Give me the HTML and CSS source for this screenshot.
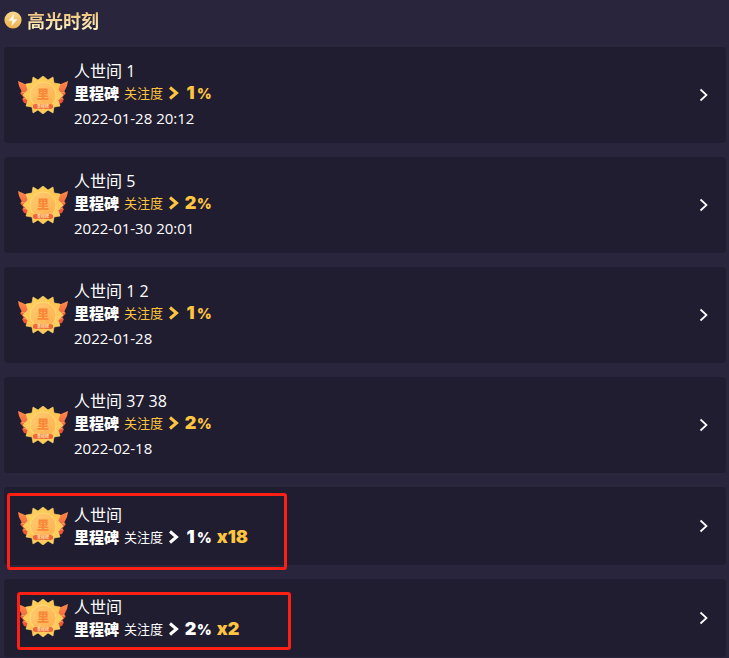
FILE: index.html
```html
<!DOCTYPE html>
<html lang="zh-CN">
<head>
<meta charset="utf-8">
<meta name="viewport" content="width=device-width, initial-scale=1">
<title>高光时刻</title>
<link rel="stylesheet" href="styles.css">
</head>
<body>
<svg class="defs" width="0" height="0" aria-hidden="true">
  <defs>
    <linearGradient id="gold" x1="0" y1="0" x2="1" y2="1">
      <stop offset="0" stop-color="#ffd45e"/><stop offset=".5" stop-color="#ffc452"/><stop offset="1" stop-color="#ffd565"/>
    </linearGradient>
    <linearGradient id="disc" x1="0" y1="0" x2="1" y2="1">
      <stop offset="0" stop-color="#ffcf73"/><stop offset="1" stop-color="#ffab4a"/>
    </linearGradient>
    <linearGradient id="wing" x1="0" y1="0" x2="0" y2="1">
      <stop offset="0" stop-color="#ff8a4a"/><stop offset="1" stop-color="#e94a35"/>
    </linearGradient>
    <linearGradient id="bolt" x1="0" y1="0" x2="0" y2="1">
      <stop offset="0" stop-color="#f8d98f"/><stop offset="1" stop-color="#eeaf4f"/>
    </linearGradient>
    <symbol id="badge" viewBox="0 0 50 38">
      <g>
        <path d="M0 5 L7 8 L14 8 L14 29 L6 27 L4 23 L6 22 L2 17 L4 16 L1 10 Z" fill="url(#wing)"/>
        <path d="M3 16 L10 18 M5 22 L11 24" stroke="#ffae65" stroke-width=".8"/>
      </g>
      <g transform="translate(50 0) scale(-1 1)">
        <path d="M0 5 L7 8 L14 8 L14 29 L6 27 L4 23 L6 22 L2 17 L4 16 L1 10 Z" fill="url(#wing)"/>
        <path d="M3 16 L10 18 M5 22 L11 24" stroke="#ffae65" stroke-width=".8"/>
      </g>
      <path d="M15 1 L20 4 L25 0 L30 4 L35 1 L36 7 L42 8 L40 14 L45 19 L40 24 L42 30 L36 31 L35 37 L30 34 L25 38 L20 34 L15 37 L14 31 L8 30 L10 24 L5 19 L10 14 L8 8 L14 7 Z" fill="url(#gold)" stroke="#ffdc6c" stroke-width=".6" stroke-linejoin="round"/>
      <circle cx="25" cy="19" r="13" fill="url(#disc)" stroke="#ffda78"/>
      <circle cx="25" cy="19" r="11" fill="none" stroke="#ffbd62" stroke-width=".6"/>
      <text x="25" y="23" class="badge-char">里</text>
      <path d="M17 28 H33 L35 29 V32 L33 33 H17 L15 32 V29 Z" fill="#f2683a"/>
      <text x="25" y="32" class="badge-ribbon">里程碑</text>
    </symbol>
    <symbol id="chevron" viewBox="0 0 10 14">
      <path d="M1 1.5 L7.5 7 L1 12.5" fill="none" stroke="currentColor" stroke-width="3"/>
    </symbol>
    <symbol id="arrow" viewBox="0 0 10 14">
      <path d="M1.5 1.5 L7.5 7 L1.5 12.5" fill="none" stroke="currentColor" stroke-width="1.7"/>
    </symbol>
  </defs>
</svg>
<main class="page">
  <header class="heading">
    <svg class="heading-icon" viewBox="0 0 18 18" aria-hidden="true">
      <circle cx="9" cy="9" r="8.6" fill="url(#bolt)"/>
      <path d="M10 3 L4.5 9.7 H8.4 L7.5 15 L13.5 8.2 H9.5 Z" fill="#fff8e6"/>
    </svg>
    <h1>高光时刻</h1>
  </header>
  <ul class="list">
    <li><a class="card" href="#">
      <svg class="badge" aria-hidden="true"><use href="#badge"/></svg>
      <span class="info">
        <span class="title">人世间 1</span>
        <span class="milestone"><b class="label">里程碑</b><span class="metric">关注度</span><svg class="chevron" aria-hidden="true"><use href="#chevron"/></svg><span class="amount"><span class="value">1</span><span class="unit">%</span></span></span>
        <time class="date">2022-01-28 20:12</time>
      </span>
      <svg class="arrow" aria-hidden="true"><use href="#arrow"/></svg>
    </a></li>
    <li><a class="card" href="#">
      <svg class="badge" aria-hidden="true"><use href="#badge"/></svg>
      <span class="info">
        <span class="title">人世间 5</span>
        <span class="milestone"><b class="label">里程碑</b><span class="metric">关注度</span><svg class="chevron" aria-hidden="true"><use href="#chevron"/></svg><span class="amount"><span class="value">2</span><span class="unit">%</span></span></span>
        <time class="date">2022-01-30 20:01</time>
      </span>
      <svg class="arrow" aria-hidden="true"><use href="#arrow"/></svg>
    </a></li>
    <li><a class="card" href="#">
      <svg class="badge" aria-hidden="true"><use href="#badge"/></svg>
      <span class="info">
        <span class="title">人世间 1 2</span>
        <span class="milestone"><b class="label">里程碑</b><span class="metric">关注度</span><svg class="chevron" aria-hidden="true"><use href="#chevron"/></svg><span class="amount"><span class="value">1</span><span class="unit">%</span></span></span>
        <time class="date">2022-01-28</time>
      </span>
      <svg class="arrow" aria-hidden="true"><use href="#arrow"/></svg>
    </a></li>
    <li><a class="card" href="#">
      <svg class="badge" aria-hidden="true"><use href="#badge"/></svg>
      <span class="info">
        <span class="title">人世间 37 38</span>
        <span class="milestone"><b class="label">里程碑</b><span class="metric">关注度</span><svg class="chevron" aria-hidden="true"><use href="#chevron"/></svg><span class="amount"><span class="value">2</span><span class="unit">%</span></span></span>
        <time class="date">2022-02-18</time>
      </span>
      <svg class="arrow" aria-hidden="true"><use href="#arrow"/></svg>
    </a></li>
    <li><a class="card card-group" href="#">
      <svg class="badge" aria-hidden="true"><use href="#badge"/></svg>
      <span class="info">
        <span class="title">人世间</span>
        <span class="milestone"><b class="label">里程碑</b><span class="metric">关注度</span><svg class="chevron" aria-hidden="true"><use href="#chevron"/></svg><span class="amount"><span class="value">1</span><span class="unit">%</span><span class="count">x18</span></span></span>
      </span>
      <svg class="arrow" aria-hidden="true"><use href="#arrow"/></svg>
      <span class="mark mark-wide"></span>
    </a></li>
    <li><a class="card card-group" href="#">
      <svg class="badge" aria-hidden="true"><use href="#badge"/></svg>
      <span class="info">
        <span class="title">人世间</span>
        <span class="milestone"><b class="label">里程碑</b><span class="metric">关注度</span><svg class="chevron" aria-hidden="true"><use href="#chevron"/></svg><span class="amount"><span class="value">2</span><span class="unit">%</span><span class="count">x2</span></span></span>
      </span>
      <svg class="arrow" aria-hidden="true"><use href="#arrow"/></svg>
      <span class="mark mark-tight"></span>
    </a></li>
  </ul>
</main>
</body>
</html>
```
FILE: styles.css
```css
* {
  box-sizing: border-box;
}

body {
  margin: 0;
  background: #28253d;
  color: #fff;
  font-family: "Open Sans", "Noto Sans CJK SC", sans-serif;
}

.defs {
  position: absolute;
}

.page {
  padding: 8px 3px 0 4px;
}

.heading {
  display: flex;
  align-items: center;
  gap: 5px;
  height: 24px;
  margin-bottom: 15px;
}

.heading-icon {
  width: 18px;
  height: 18px;
}

.heading h1 {
  margin: 0;
  font-family: "Noto Sans CJK SC", sans-serif;
  font-size: 18px;
  line-height: 24px;
  font-weight: 700;
  color: transparent;
  background: linear-gradient(#f0bf78 15%, #fff0bd 85%);
  background-clip: text;
  -webkit-background-clip: text;
}

.list {
  display: flex;
  flex-direction: column;
  gap: 14px;
  margin: 0;
  padding: 0;
  list-style: none;
}

.card {
  position: relative;
  display: flex;
  align-items: center;
  padding: 13px 17px 13px 14px;
  border-radius: 4px;
  background: #201d30;
  color: #fff;
  text-decoration: none;
}

.card-group {
  padding-top: 17px;
  padding-bottom: 17px;
}

.badge {
  flex: none;
  width: 50px;
  height: 38px;
  margin-right: 6px;
}

.badge-char,
.badge-ribbon {
  font-family: "Noto Sans CJK SC", sans-serif;
  font-weight: 900;
  text-anchor: middle;
}

.badge-char {
  font-size: 12px;
  fill: #f98739;
}

.badge-ribbon {
  font-size: 4px;
  fill: #ffd596;
}

.info {
  flex: 1;
  display: flex;
  flex-direction: column;
}

.title {
  font-size: 16px;
  line-height: 22px;
}

.milestone {
  display: flex;
  align-items: center;
  height: 22px;
  line-height: 22px;
  color: #ffc540;
}

.label {
  margin-right: 5px;
  font-size: 15px;
  font-weight: 900;
  color: #fff;
}

.metric {
  margin-right: 6px;
  font-size: 13px;
}

.chevron {
  width: 10px;
  height: 14px;
  margin-right: 5px;
}

.amount {
  display: flex;
  align-items: baseline;
  font-family: Inter, sans-serif;
  font-size: 18px;
  font-weight: 900;
}

.value {
  min-width: 13px;
  text-align: center;
}

.unit {
  font-size: 14px;
}

.count {
  margin-left: 5px;
  color: #ffc540;
}

.card-group .milestone {
  color: #fff;
}

.date {
  margin-top: 3px;
  font-size: 15px;
  line-height: 23px;
}

.arrow {
  flex: none;
  width: 10px;
  height: 14px;
}

.mark {
  position: absolute;
  border: 3px solid #ff2015;
  border-radius: 3px;
}

.mark-wide {
  top: 6px;
  left: 3px;
  width: 280px;
  height: 77px;
}

.mark-tight {
  top: 13px;
  left: 13px;
  width: 274px;
  height: 58px;
}
```
